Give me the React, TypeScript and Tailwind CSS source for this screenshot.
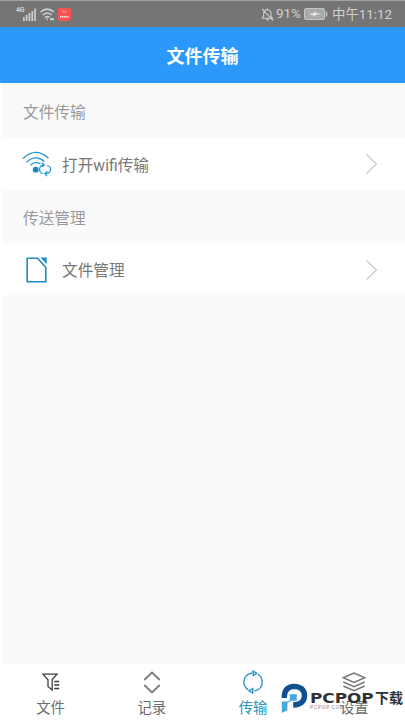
import type { ReactNode } from 'react';

function StatusBar() {
  return (
    <div className="flex h-[27px] items-center justify-between border-t border-[#a0a0a0] bg-[#757575] pr-[13px] pl-[16px] text-[#d0d0d0]">
      <div className="flex items-center">
        <span className="-mt-[8px] w-[7px] text-[7px] leading-none font-bold tracking-tighter">4G</span>
        <svg width="13" height="13" viewBox="0 0 13 13" fill="currentColor">
          <path d="M0 9h1.7v4H0zM2.8 7h1.7v6H2.8zM5.6 5h1.7v8H5.6zM8.4 3h1.7v10H8.4zM11.2 0.5h1.7V13h-1.7z" />
        </svg>
        <svg className="ml-[4px]" width="15" height="13" viewBox="0 0 15 13" fill="none" stroke="currentColor" strokeWidth="1.5">
          <path d="M0.5 4Q7 -1.8 14 4M2.8 7Q7.2 3 11.8 7M5 9.7Q7.3 7.6 9.5 9.5" />
          <circle cx="7.2" cy="11.4" r="0.8" fill="currentColor" stroke="none" />
          <path d="M10 11.2h4" strokeWidth="2" />
        </svg>
        <div className="ml-[3px] flex h-[13px] w-[13px] flex-col items-center justify-center rounded-[2px] bg-[#f45353]">
          <svg width="11" height="9" viewBox="0 0 11 9" fill="none" stroke="#ffd9d9">
            <path d="M3.5 1Q5.5 3.5 7.5 1" strokeWidth="0.8" />
            <path d="M1 6.8h9" strokeWidth="1.8" strokeDasharray="1.3 0.5" />
          </svg>
        </div>
      </div>
      <div className="flex items-center text-[14px] leading-none">
        <svg width="13" height="13" viewBox="0 0 13 13" fill="none" stroke="currentColor" strokeWidth="1.1">
          <path d="M1 10.2h10.5L10 8V5Q9.7 2 6.3 1.8 3 2 2.7 5v3L1 10.2M5 11.8h3M1 0.8l11 11.5M6.3 0.5v1.5" />
        </svg>
        <span className="ml-[2px] w-[26px] text-[13.6px] tracking-[-0.2px]">91%</span>
        <svg className="ml-[2px]" width="24" height="12" viewBox="0 0 24 12">
          <rect x="0.5" y="0.5" width="20" height="11" rx="1.5" fill="#a9a9a9" stroke="#c4c4c4" />
          <path d="M4 6l6-1 1-2 1.5 2 5 1-6 .8-1 2.2-1.5-2z" fill="#e8e8e8" />
          <path d="M22.5 3.5v5" stroke="#c9c9c9" strokeWidth="1.5" />
        </svg>
        <span className="ml-[4px] w-[60px] pt-px text-[13.4px] whitespace-nowrap">中午11:12</span>
      </div>
    </div>
  );
}

function Row({ icon, label }: { icon: ReactNode; label: string }) {
  return (
    <div className="flex items-center bg-white pr-[27px] pl-[22px]">
      <div className="flex w-[40px] items-center">{icon}</div>
      <span className="flex-1 pt-[3px] text-[15.7px] leading-none text-[#777]">{label}</span>
      <svg width="13" height="22" viewBox="0 0 13 22" fill="none" stroke="#c8c8c8" strokeWidth="1.1">
        <path d="M1.5 1.5L11.5 11L1.5 20.5" />
      </svg>
    </div>
  );
}

function WifiSync() {
  return (
    <svg width="30" height="26" viewBox="0 0 30 26" fill="none" stroke="#2497cf" strokeWidth="1.3">
      <path d="M1 7.5Q13.5 -4.5 26.5 7.2M4.5 11.2Q13.5 2.8 22.5 10.5M8.3 14.2Q13 10 18.5 12.8" />
      <circle cx="13.7" cy="18.7" r="2.9" fill="#1688c2" stroke="none" />
      <path d="M18 20.5Q16.3 15.2 21.5 13.8M19.7 11.8l2.6 1.9-2.3 2.5M18 20.5q1 2 3 2M25 14.5q4.5 1.5 3.5 5-1.2 3.2-5.5 3.2M25.4 20.2l-2.7 2.5 2.4 2.4" strokeWidth="1.2" />
    </svg>
  );
}

function Document() {
  return (
    <svg className="ml-[4px]" width="22" height="26" viewBox="0 0 22 26">
      <path d="M1.2 1.2h10.3l8.3 9v14.6H1.2z" fill="none" stroke="#1f8cc4" strokeWidth="1.6" />
      <path d="M14.5 0.5h6.2v6.7z" fill="#1f8cc4" />
    </svg>
  );
}

function Tab({ icon, label, active }: { icon: ReactNode; label: string; active?: boolean }) {
  return (
    <div className={active ? 'flex flex-col items-center text-[#2a94c4]' : 'flex flex-col items-center text-[#6c6c6c]'}>
      <div className="flex h-[36px] items-center">{icon}</div>
      <span className="mt-[1px] text-[14.4px] leading-[16px]">{label}</span>
    </div>
  );
}

function Watermark() {
  return (
    <div className="absolute top-[683px] left-[281px] flex text-[#303236]">
      <svg width="27" height="31" viewBox="0 0 27 31" fill="none">
        <path d="M3.3 15V13Q4 3.8 13 3.4 23.3 3.8 23.5 12.8 23 21.5 12.2 22" stroke="#10508f" strokeWidth="5.4" />
        <path d="M8.8 11.2h7v6.5h-7z" fill="#46a9de" />
        <path d="M0.8 18.5h5.6v9L0.8 29.8z" fill="#46a9de" />
        <path d="M11 16.5l-7 4.5" stroke="#46a9de" strokeWidth="1.2" />
      </svg>
      <div className="ml-[2px] pt-[7px]">
        <div className="flex h-[16px] items-center">
          <span className="w-[65px] origin-left scale-x-[1.17] font-['DejaVu_Sans'] text-[14.4px] leading-[16px] font-bold">
            PCPOP
          </span>
          <span className="text-[14px] leading-[16px] font-bold whitespace-nowrap">下载</span>
        </div>
        <div className="-mt-[2px] text-[5px] leading-[6px] tracking-[0.8px] text-[#808080]">PCPOP.COM</div>
      </div>
    </div>
  );
}

export default function App() {
  return (
    <div className="relative flex h-[720px] w-[405px] flex-col overflow-hidden bg-white font-['Roboto','Noto_Sans_CJK_SC',sans-serif]">
      <StatusBar />
      <header className="flex h-[56px] items-center justify-center bg-[#2d98fb] pt-[3px] text-[18px] leading-none font-bold text-white">
        文件传输
      </header>
      <main className="ml-[2px] grid flex-1 grid-rows-[55px_52px_54px_51px_1fr] bg-[#fafafa]">
        <h2 className="flex items-center pt-[5px] pl-[21px] text-[15.7px] leading-none text-[#999]">文件传输</h2>
        <div className="-ml-[2px] grid">
          <Row icon={<WifiSync />} label="打开wifi传输" />
        </div>
        <h2 className="flex items-center pt-[3px] pl-[21px] text-[15.7px] leading-none text-[#999]">传送管理</h2>
        <div className="-ml-[2px] grid">
          <Row icon={<Document />} label="文件管理" />
        </div>
      </main>
      <nav className="grid h-[56px] grid-cols-4 bg-white">
        <Tab
          label="文件"
          icon={
            <svg width="18" height="18" viewBox="0 0 18 18" fill="none" stroke="#3c3c3c" strokeWidth="1.3">
              <path d="M1 1.2h14L10.2 6.5V17L6 13.5V6.8z" />
              <path d="M12.2 8.5h5M12.2 12h5M12.2 15.5h5" />
            </svg>
          }
        />
        <Tab
          label="记录"
          icon={
            <svg width="18" height="23" viewBox="0 0 18 23" fill="none" stroke="#7c7c7c" strokeWidth="1.8">
              <path d="M1.2 9L9 1.5 16.8 9M1.2 14L9 21.5 16.8 14" />
            </svg>
          }
        />
        <Tab
          active
          label="传输"
          icon={
            <svg width="22" height="24" viewBox="0 0 22 24" fill="none" stroke="#2f96c6" strokeWidth="1.4">
              <path d="M10 3Q2 4.5 1.8 12q.2 5 4.5 7.8M12.5 21Q20 19.5 20.2 12 20 7 16 4.2" />
              <path d="M11 1l3.8 2.3L11.3 5.5zM10.8 18.5l-3.8 2.3 3.6 2.2z" />
            </svg>
          }
        />
        <Tab
          label="设置"
          icon={
            <svg width="24" height="20" viewBox="0 0 24 20" fill="none" stroke="#777" strokeWidth="1.5">
              <path d="M1.3 5.8L12 1l10.7 4.8L12 10.5zM1.3 10L12 14.7 22.7 10M1.3 14L12 18.8 22.7 14" />
            </svg>
          }
        />
      </nav>
      <Watermark />
    </div>
  );
}
